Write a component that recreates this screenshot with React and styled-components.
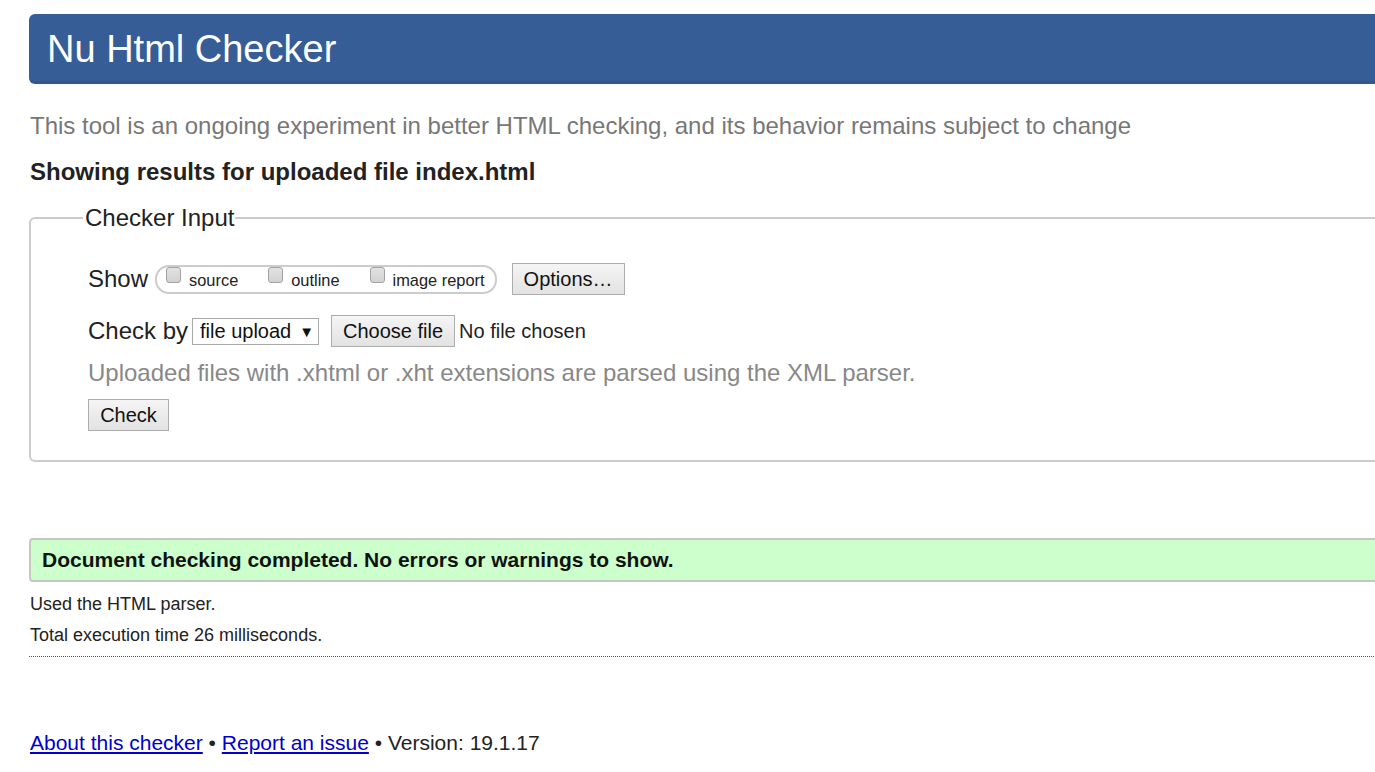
import React from "react";
import styled, { createGlobalStyle } from "styled-components";

const GlobalStyle = createGlobalStyle`
  html, body {
    margin: 0;
    padding: 0;
    overflow: hidden;
    background: #fff;
  }
  body {
    font-family: "Liberation Sans", Arial, sans-serif;
    color: #222;
  }
`;

function App() {
  return (
    <Page>
      <GlobalStyle />
      <Title>Nu Html Checker</Title>
      <Intro>
        This tool is an ongoing experiment in better HTML checking, and its
        behavior remains subject to change
      </Intro>
      <Heading>Showing results for uploaded file index.html</Heading>

      <InputSet>
        <Legend>Checker Input</Legend>
        <Row>
          <RowLabel>Show</RowLabel>
          <Pill>
            <Option>
              <Box type="checkbox" />
              <OptionText>source</OptionText>
            </Option>
            <Option>
              <Box type="checkbox" />
              <OptionText>outline</OptionText>
            </Option>
            <Option>
              <Box type="checkbox" />
              <OptionText>image report</OptionText>
            </Option>
          </Pill>
          <Button $w={113}>Options…</Button>
        </Row>
        <Row $top={20}>
          <RowLabel>Check by</RowLabel>
          <Select>
            file upload <Arrow>▼</Arrow>
          </Select>
          <Button $w={124} $gap={12}>Choose file</Button>
          <FileName>No file chosen</FileName>
        </Row>
        <Hint>
          Uploaded files with .xhtml or .xht extensions are parsed using the
          XML parser.
        </Hint>
        <Button $w={81} $gap={0}>Check</Button>
      </InputSet>

      <Success>
        Document checking completed. No errors or warnings to show.
      </Success>
      <Detail>Used the HTML parser.</Detail>
      <Detail $top={11}>Total execution time 26 milliseconds.</Detail>
      <Rule />

      <Footer>
        <FooterLink href="#">About this checker</FooterLink> •{" "}
        <FooterLink href="#">Report an issue</FooterLink> • Version: 19.1.17
      </Footer>
    </Page>
  );
}

export default App;

const Page = styled.div`
  width: 1420px;
  padding: 14px 0 0 29px;
  height: 772px;
  box-sizing: border-box;
`;

const Title = styled.h1`
  margin: 0;
  height: 70px;
  box-sizing: border-box;
  display: flex;
  align-items: center;
  padding: 4px 18px 0;
  background: #365d95;
  border-bottom: 3px solid #325789;
  border-radius: 6px 0 0 6px;
  color: #fff;
  font-size: 38px;
  font-weight: normal;
`;

const Intro = styled.p`
  margin: 28px 0 0 1px;
  font-size: 24px;
  line-height: 28px;
  color: #777;
`;

const Heading = styled.h2`
  margin: 18px 0 0 1px;
  font-size: 24px;
  line-height: 28px;
  font-weight: bold;
  color: #222;
`;

const InputSet = styled.fieldset`
  margin: 18px 0 0 0;
  padding: 31px 0 29px 57px;
  border: 2px solid #ccc;
  border-radius: 6px 0 0 6px;
`;

const Legend = styled.legend`
  margin-left: -5px;
  padding: 0 1px 0 2px;
  font-size: 24px;
  line-height: 28px;
  color: #222;
`;

const Row = styled.div`
  display: flex;
  align-items: center;
  height: 32px;
  margin-top: ${(p) => p.$top || 0}px;
`;

const RowLabel = styled.span`
  font-size: 24px;
  margin-right: 4px;
`;

const Pill = styled.div`
  display: flex;
  align-items: stretch;
  gap: 30px;
  height: 29px;
  box-sizing: border-box;
  padding: 0 10px 0 9px;
  border: 2px solid #ccc;
  border-radius: 14px;
  margin-left: 3px;
`;

const Option = styled.label`
  display: flex;
  align-items: flex-start;
  gap: 8px;
`;

const OptionText = styled.span`
  padding-top: 4px;
  font-size: 16.4px;
  line-height: 18px;
`;

const Box = styled.input`
  appearance: none;
  margin: 0;
  width: 15px;
  height: 16px;
  border: 1px solid #a2a2a2;
  border-radius: 3px;
  background: linear-gradient(#e2e2e2, #d2d2d2);
  box-sizing: border-box;
`;

const Button = styled.button`
  height: 32px;
  width: ${(p) => p.$w}px;
  margin-left: ${(p) => (p.$gap === undefined ? 15 : p.$gap)}px;
  padding: 0;
  font-family: "Liberation Sans", Arial, sans-serif;
  font-size: 20px;
  color: #111;
  border: 1px solid #adadad;
  border-radius: 0;
  background: linear-gradient(#f5f5f5, #e2e2e2);
`;

const Select = styled.div`
  display: flex;
  align-items: center;
  height: 27px;
  width: 127px;
  box-sizing: border-box;
  padding-left: 7px;
  border: 1px solid #a9a9a9;
  font-size: 20px;
  color: #111;
`;

const Arrow = styled.span`
  font-size: 15px;
  margin-left: 8px;
`;

const FileName = styled.span`
  font-size: 20px;
  margin-left: 4px;
  color: #222;
`;

const Hint = styled.p`
  margin: 12px 0 12px;
  font-size: 24px;
  line-height: 28px;
  color: #888;
`;

const Success = styled.div`
  margin-top: 76px;
  height: 44px;
  box-sizing: border-box;
  display: flex;
  align-items: center;
  padding-left: 11px;
  background: #ccffcc;
  border: 2px solid #c4c9c0;
  border-radius: 4px 0 0 4px;
  font-size: 21px;
  font-weight: bold;
  color: #111;
`;

const Detail = styled.p`
  margin: ${(p) => p.$top || 12}px 0 0 1px;
  font-size: 18px;
  line-height: 20px;
  color: #222;
`;

const Rule = styled.hr`
  margin: 11px 0 0;
  border: 0;
  border-top: 1px dotted #555;
`;

const Footer = styled.p`
  margin: 74px 0 0 1px;
  font-size: 21px;
  line-height: 24px;
  color: #222;
`;

const FooterLink = styled.a`
  color: #0000cc;
  text-decoration: underline;
`;
